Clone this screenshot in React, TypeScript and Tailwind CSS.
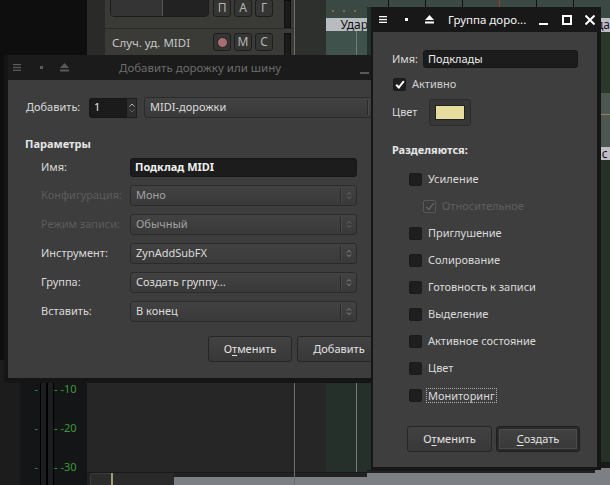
import React from 'react';

const ui = "font-['Noto_Sans',sans-serif]";

function Hamburger({ color }: { color: string }) {
  return (
    <svg width="8" height="7" viewBox="0 0 8 7" fill={color}>
      <rect x="0" y="0" width="8" height="1.3" />
      <rect x="0" y="2.9" width="8" height="1.3" />
      <rect x="0" y="5.7" width="8" height="1.3" />
    </svg>
  );
}

function Eject({ color }: { color: string }) {
  return (
    <svg width="9" height="9" viewBox="0 0 9 9" fill={color}>
      <path d="M4.5 0 L9 5 L0 5 Z" />
      <rect x="0" y="6.5" width="9" height="2" />
    </svg>
  );
}

function UpDown({ color = '#8a8a8a' }: { color?: string }) {
  return (
    <svg width="6" height="9" viewBox="0 0 6 9" fill="none" stroke={color} strokeWidth="1">
      <path d="M1 3.5 L3 1.5 L5 3.5" />
      <path d="M1 5.5 L3 7.5 L5 5.5" />
    </svg>
  );
}

function Combo({ value, disabled, width = 'w-[227px]' }: { value: string; disabled?: boolean; width?: string }) {
  return (
    <div
      className={`flex h-[21px] ${width} items-center rounded-[3px] border border-[#2b2b2b] bg-gradient-to-b from-[#424242] to-[#393939]`}
    >
      <span className={`flex-1 truncate pl-[5px] ${disabled ? 'text-[#a2a2a2]' : 'text-[#dcdcdc]'}`}>{value}</span>
      <span className="h-[15px] w-px bg-[#2a2a2a]" />
      <span className="h-[15px] w-px bg-[#4a4a4a]" />
      <span className="flex w-[14px] items-center justify-center">
        <UpDown color={disabled ? '#6a6a6a' : '#8c8c8c'} />
      </span>
    </div>
  );
}

function Button({ children, w, isDefault }: { children: React.ReactNode; w: string; isDefault?: boolean }) {
  return (
    <div
      className={`flex h-[26px] ${w} items-center justify-center rounded-[3px] border bg-gradient-to-b from-[#424242] to-[#383838] text-[#e2e2e2] ${
        isDefault ? 'border-[#1e1e1e] shadow-[inset_0_0_0_2px_#2a2a2a,inset_0_0_0_3px_#4a4a4a]' : 'border-[#262626]'
      }`}
    >
      {children}
    </div>
  );
}

function Check({ checked, disabled }: { checked?: boolean; disabled?: boolean }) {
  return (
    <span
      className={`flex h-[13px] w-[13px] shrink-0 items-center justify-center rounded-[2px] border ${
        disabled ? 'border-[#575757] bg-[#3c3c3c]' : 'border-[#1b1b1b] bg-[#1e1e1e]'
      }`}
    >
      {checked && (
        <svg width="10" height="9" viewBox="0 0 10 9" fill="none" stroke={disabled ? '#656565' : '#ffffff'} strokeWidth={disabled ? 1.3 : 2}>
          <path d="M1.2 4.8 L3.8 7.5 L8.8 1.2" />
        </svg>
      )}
    </span>
  );
}

function TrackButton({ children }: { children: React.ReactNode }) {
  return (
    <div className="flex h-[18px] w-[18px] items-center justify-center rounded-[3px] border border-[#1e1e1e] bg-[#353633] text-[12px] leading-none text-[#b4b4b4]">
      {children}
    </div>
  );
}

function Background() {
  return (
    <div className="flex h-[485px] w-[610px]">
      {/* left: dark + meter */}
      <div className="flex w-[88px] flex-col bg-[#0e0e0e]">
        <div className="h-[360px]" />
        <div className="flex flex-1">
          <div className="w-[20px] bg-[#1c1c1c]" />
          <div className="flex w-[20px] flex-col items-end gap-[27px] bg-[#131517] pr-[2px] pt-[23px] text-[10px] leading-[12px] text-[#3f9a3a]">
            <span>-</span>
            <span>-</span>
            <span>-</span>
          </div>
          <div className="w-px bg-black" />
          <div className="w-[5px] bg-[#1c1e20]" />
          <div className="w-[2px] bg-black" />
          <div className="w-[5px] bg-[#1c1e20]" />
          <div className="w-px bg-black" />
          <div className="flex flex-1 flex-col gap-[27px] bg-[#131517] pt-[23px] text-[11px] leading-[12px] text-[#3f9a3a]">
            <span>- -10</span>
            <span>- -20</span>
            <span>- -30</span>
          </div>
        </div>
      </div>

      {/* track headers */}
      <div className="flex w-[209px] flex-col">
        <div className="flex h-[57px]">
          <div className="w-[18px] bg-[#2a2b29]" />
          <div className="flex flex-1 flex-col bg-[#3a3b37]">
            <div className="flex h-[31px] items-start border-b border-[#2b2c29] pl-[5px]">
              <div className="mt-[-4px] flex h-[21px] w-[99px] overflow-hidden rounded-[4px] border border-[#1c1c1c]">
                <div className="w-[51px] bg-[#343434]" />
                <div className="w-px bg-[#555]" />
                <div className="flex-1 bg-[#222]" />
              </div>
              <div className="ml-[4px] mt-[-1px] flex gap-[3px]">
                <TrackButton>П</TrackButton>
                <TrackButton>А</TrackButton>
                <TrackButton>Г</TrackButton>
              </div>
              <div className="ml-[11px] h-[28px] w-[7px] border border-[#0f0f0f] bg-[#1b1b1b]" />
            </div>
            <div className="flex flex-1 items-start pl-[5px] pt-[4px]">
              <div className="flex h-[19px] w-[103px] items-center pl-[2px] text-[11.5px] text-[#c6c6c6]">Случ. уд. MIDI</div>
              <div className="flex gap-[3px]">
                <div className="flex h-[18px] w-[18px] items-center justify-center rounded-[3px] border border-[#1e1e1e] bg-[#353633]">
                  <span className="h-[11px] w-[11px] rounded-full border border-[#2a2020] bg-[#a66f75]" />
                </div>
                <TrackButton>M</TrackButton>
                <TrackButton>C</TrackButton>
              </div>
              <div className="ml-[11px] h-[26px] w-[7px] border border-[#0f0f0f] bg-[#1b1b1b]" />
            </div>
          </div>
        </div>
        <div className="flex-1 bg-[#262626]" />
        <div className="flex h-[13px] border-t border-[#1a1a1a] bg-[#222]">
          <div className="w-[3px]" />
          <div className="w-[21px] rounded-tl-[3px] border-l border-t border-[#3a3a3a] bg-[#2c2c2c]" />
          <div className="w-[2px] bg-[#a39e72]" />
          <div className="w-[61px] bg-[#2a2a2a]" />
          <div className="mt-[4px] flex-1 bg-[#7c7f84]" />
        </div>
      </div>

      {/* gap column */}
      <div className="flex w-[33px] flex-col border-l border-[#6e6e6e]">
        <div className="h-[57px] bg-[#2e302d]" />
        <div className="flex-1 bg-[#262626]" />
        <div className="h-[13px] border-t border-[#1a1a1a] bg-[#222]">
          <div className="mt-[4px] h-[9px] bg-[#7c7f84]" />
        </div>
      </div>

      {/* region column */}
      <div className="flex w-[41px] flex-col">
        <div className="flex h-[18px] items-end gap-[9px] bg-[#3a4943] pb-[6px] pl-[6px]">
          <span className="h-[2px] w-[2px] bg-[#8a6a3a]" />
          <span className="h-[2px] w-[2px] bg-[#8a6a3a]" />
          <span className="h-[2px] w-[2px] bg-[#8a6a3a]" />
        </div>
        <div className="flex h-[13px] items-center overflow-hidden whitespace-nowrap bg-[#b8bcc1] pl-[14px] text-[12px] leading-none text-[#121212]">
          Удар
        </div>
        <div className="flex flex-1">
          <div className="flex w-[30px] flex-col">
            <div className="h-[26px] bg-[#3f524b]" />
            <div className="flex-1 bg-[#25302a]" />
          </div>
          <div className="w-px bg-[#777]" />
          <div className="flex flex-1 flex-col">
            <div className="h-[26px] bg-[#3f524b]" />
            <div className="flex-1 bg-[#25302a]" />
          </div>
        </div>
        <div className="h-[13px] border-t border-[#1a1a1a] bg-[#222]">
          <div className="mt-[4px] h-[9px] bg-[#7c7f84]" />
        </div>
      </div>

      {/* under the group dialog */}
      <div className="flex w-[230px] flex-col">
        <div className="flex h-[7px] justify-between bg-[#3a4943] px-[21px]">
          <span className="w-px bg-[#111]" />
          <span className="w-px bg-[#111]" />
          <span className="w-px bg-[#111]" />
          <span className="w-px bg-[#a33]" />
          <span className="w-px bg-[#111]" />
          <span className="w-px bg-[#111]" />
        </div>
        <div className="flex-1 bg-[#25302a]" />
        <div className="h-[15px] border-t border-[#1a1a1a] bg-[#222]">
          <div className="mt-[2px] h-[13px] bg-[#7c7f84]" />
        </div>
      </div>

      {/* right edge strip */}
      <div className="flex flex-1 flex-col">
        <div className="h-[18px] bg-[#3a4943]" />
        <div className="flex h-[14px] items-center overflow-hidden whitespace-nowrap bg-[#c0bcc6] pl-[1px] text-[12px] leading-none text-[#1a1420]">
          да
        </div>
        <div className="h-[61px] bg-[#2a382b]" />
        <div className="flex h-[54px] flex-col bg-[#4d5651]">
          <div className="h-[21px]" />
          <div className="h-px bg-[#8c8a4a]" />
        </div>
        <div className="flex h-[13px] items-center overflow-hidden whitespace-nowrap bg-[#c0bcc6] text-[12px] leading-none text-[#1a1420]">
          ас
        </div>
        <div className="flex-1 bg-[#263026]" />
        <div className="h-[6px] bg-[#1a1a1a]" />
        <div className="h-[17px] bg-[#7c7f84]" />
      </div>
    </div>
  );
}

function AddTrackDialog() {
  const params: { label: string; value: string; disabled?: boolean }[] = [
    { label: 'Конфигурация:', value: 'Моно', disabled: true },
    { label: 'Режим записи:', value: 'Обычный', disabled: true },
    { label: 'Инструмент:', value: 'ZynAddSubFX' },
    { label: 'Группа:', value: 'Создать группу...' },
    { label: 'Вставить:', value: 'В конец' },
  ];

  return (
    <div className="absolute left-[4px] top-[55px] flex h-[328px] w-[420px] flex-col bg-[#151515] pb-[5px] pl-[4px]">
      {/* title bar */}
      <div className="flex h-[25px] items-center whitespace-nowrap bg-[#1b1b1b]">
        <span className="ml-[5px]">
          <Hamburger color="#5a5a5a" />
        </span>
        <span className="ml-[19px] h-[3px] w-[3px] bg-[#5a5a5a]" />
        <span className="ml-[17px]">
          <Eject color="#5a5a5a" />
        </span>
        <span className="ml-[50px] w-[162px] text-[11.5px] text-[#6c6c6c]">Добавить дорожку или шину</span>
        <span className="ml-[79px] mt-[10px] h-[2px] w-[9px] bg-[#5a5a5a]" />
      </div>

      {/* body */}
      <div className="flex flex-1 flex-col bg-[#3d3d3d] pl-[18px] pt-[17px] text-[11px] text-[#dadada]">
        <div className="flex h-[21px] items-center">
          <span className="w-[56px] whitespace-nowrap">Добавить:</span>
          <div className="ml-[7px] flex h-[20px]">
            <div className="flex w-[38px] items-center rounded-l-[3px] border border-[#161616] bg-[#1b1b1b] pl-[4px] text-[#e6e6e6]">
              1
            </div>
            <div className="flex w-[10px] flex-col items-center justify-center gap-[2px] border border-l-0 border-[#1f1f1f] bg-[#2e2e2e]">
              <svg width="6" height="4" viewBox="0 0 6 4" fill="none" stroke="#b0b0b0" strokeWidth="1">
                <path d="M0.5 3.5 L3 1 L5.5 3.5" />
              </svg>
              <svg width="6" height="4" viewBox="0 0 6 4" fill="none" stroke="#5c5c5c" strokeWidth="1">
                <path d="M0.5 0.5 L3 3 L5.5 0.5" />
              </svg>
            </div>
          </div>
          <div className="ml-[7px]">
            <Combo value="MIDI-дорожки" width="w-[240px]" />
          </div>
        </div>

        <div className="ml-[-1px] mt-[18px] h-[16px] font-bold leading-[16px] text-[#e6e6e6]">Параметры</div>

        <div className="mt-[6px] flex flex-col gap-[8px] pl-[15px]">
          <div className="flex items-center">
            <span className="w-[89px]">Имя:</span>
            <div className="flex h-[19px] w-[227px] items-center rounded-[3px] border border-[#171717] bg-[#1c1c1c] pl-[4px] font-bold text-[#f0f0f0]">
              Подклад MIDI
            </div>
          </div>
          {params.map((p) => (
            <div key={p.label} className="flex items-center">
              <span className={`w-[89px] whitespace-nowrap ${p.disabled ? 'text-[#5c5c5c]' : ''}`}>{p.label}</span>
              <Combo value={p.value} disabled={p.disabled} />
            </div>
          ))}
        </div>

        <div className="ml-[182px] mt-[14px] flex gap-[5px]">
          <Button w="w-[84px]">
            <span>
              О<span className="underline underline-offset-2">т</span>менить
            </span>
          </Button>
          <Button w="w-[84px]">Добавить</Button>
        </div>
      </div>
    </div>
  );
}

function GroupDialog() {
  const shared: { label: string; sub?: boolean; focus?: boolean }[] = [
    { label: 'Усиление' },
    { label: 'Относительное', sub: true },
    { label: 'Приглушение' },
    { label: 'Солирование' },
    { label: 'Готовность к записи' },
    { label: 'Выделение' },
    { label: 'Активное состояние' },
    { label: 'Цвет' },
    { label: 'Мониторинг', focus: true },
  ];

  return (
    <div className="absolute left-[371px] top-[7px] flex h-[463px] w-[230px] flex-col bg-[#161616] pb-[3px] pl-[2px] pr-[4px]">
      {/* title bar */}
      <div className="ml-[-2px] mr-[-4px] flex h-[25px] items-center whitespace-nowrap bg-[#181818] text-white">
        <span className="ml-[8px]">
          <Hamburger color="#ffffff" />
        </span>
        <span className="ml-[18px] h-[3px] w-[3px] bg-white" />
        <span className="ml-[17px]">
          <Eject color="#ffffff" />
        </span>
        <span className="ml-[14px] w-[76px] text-[11.5px] text-[#f4f4f4]">Группа доро...</span>
        <span className="ml-[15px] mt-[9px] h-[2px] w-[9px] bg-white" />
        <span className="ml-[14px] h-[10px] w-[10px] border-2 border-white" />
        <svg className="ml-[13px]" width="10" height="10" viewBox="0 0 10 10" stroke="#ffffff" strokeWidth="2">
          <path d="M0.5 0.5 L9.5 9.5 M9.5 0.5 L0.5 9.5" />
        </svg>
      </div>

      {/* body */}
      <div className="flex flex-1 flex-col bg-[#3e3e3e] pl-[19px] pt-[18px] text-[11px] text-[#dadada]">
        <div className="flex h-[18px] items-center">
          <span className="w-[31px]">Имя:</span>
          <div className="flex h-[18px] w-[155px] items-center rounded-[3px] border border-[#171717] bg-[#1c1c1c] pl-[4px] text-[#ececec]">
            Подклады
          </div>
        </div>

        <div className="ml-[1px] mt-[9px] flex h-[14px] items-center gap-[6px]">
          <Check checked />
          <span className="text-[#d0d0d0]">Активно</span>
        </div>

        <div className="mt-[8px] flex h-[27px] items-center">
          <span className="w-[37px]">Цвет</span>
          <div className="flex h-[27px] w-[42px] items-center justify-center rounded-[3px] border border-[#2c2c2c] bg-[#373737]">
            <span className="h-[15px] w-[30px] border border-[#222] bg-[#e6dc9e]" />
          </div>
        </div>

        <div className="mt-[16px] h-[16px] font-bold leading-[16px] text-[#e6e6e6]">Разделяются:</div>

        <div className="mt-[8px] flex flex-col pl-[17px]">
          {shared.map((s) => (
            <div key={s.label} className={`flex h-[27px] items-center gap-[6px] ${s.sub ? 'pl-[14px]' : ''}`}>
              <Check checked={s.sub} disabled={s.sub} />
              <span
                className={`whitespace-nowrap ${s.sub ? 'text-[#5e5e5e]' : ''} ${
                  s.focus ? 'ml-[-2px] border border-dotted border-[#b0b0b0] px-[1px] leading-[13px]' : ''
                }`}
              >
                {s.label}
              </span>
            </div>
          ))}
        </div>

        <div className="ml-[15px] mt-[17px] flex gap-[4px]">
          <Button w="w-[85px]">
            <span>
              О<span className="underline underline-offset-2">т</span>менить
            </span>
          </Button>
          <Button w="w-[84px]" isDefault>
            <span>
              <span className="underline underline-offset-2">С</span>оздать
            </span>
          </Button>
        </div>
      </div>
    </div>
  );
}

export default function App() {
  return (
    <div className={`relative h-[485px] w-[610px] overflow-hidden ${ui}`}>
      <Background />
      <AddTrackDialog />
      <GroupDialog />
    </div>
  );
}
